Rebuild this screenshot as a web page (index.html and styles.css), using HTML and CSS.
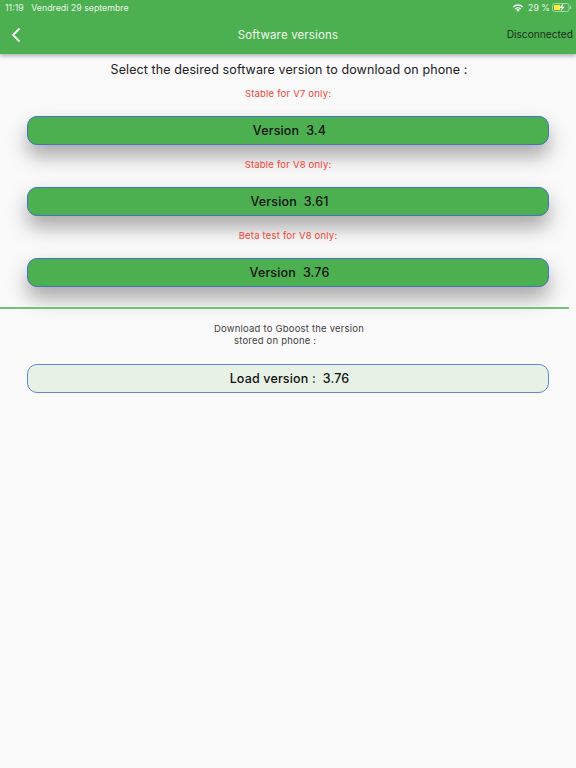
FILE: index.html
```html
<!DOCTYPE html>
<html lang="en">
<head>
<meta charset="utf-8">
<title>Software versions</title>
<link rel="stylesheet" href="styles.css">
</head>
<body>
<header class="appbar">
  <div class="status">
    <div class="status-left"><span>11:19</span><span>Vendredi 29 septembre</span></div>
    <div class="status-right">
      <svg class="wifi" viewBox="0 0 12 9" width="12" height="9"><path d="M6 8.8 4.2 6.9a2.6 2.6 0 0 1 3.6 0Z" fill="#fff"/><path d="M2.9 5.6a4.5 4.5 0 0 1 6.2 0L8.3 6.4a3.4 3.4 0 0 0-4.6 0Z" fill="#fff"/><path d="M.8 3.5a7.4 7.4 0 0 1 10.4 0l-.9.9a6.2 6.2 0 0 0-8.6 0Z" fill="#fff"/></svg>
      <span>29 %</span>
      <svg class="battery" viewBox="0 0 20 9" width="20" height="9"><rect x=".5" y=".5" width="16.5" height="8" rx="2" fill="none" stroke="#a5d6a7"/><rect x="2" y="2" width="6" height="5" fill="#ffeb3b"/><rect x="18" y="3" width="1.2" height="3" fill="#a5d6a7"/><path d="M11 0.5 7.3 5h2.4L8.5 8.5 12.9 3.8H10.5Z" fill="#fff"/></svg>
    </div>
  </div>
  <div class="toolbar">
    <svg class="back" viewBox="0 0 10 16" width="10" height="16"><path d="M8.5 1.5 2 8l6.5 6.5" fill="none" stroke="#fff" stroke-width="1.8"/></svg>
    <h1>Software versions</h1>
    <span class="conn">Disconnected</span>
  </div>
</header>
<main>
  <p class="lead">Select the desired software version to download on phone :</p>
  <p class="label">Stable for V7 only:</p>
  <button class="btn">Version&nbsp; 3.4</button>
  <p class="label">Stable for V8 only:</p>
  <button class="btn">Version&nbsp; 3.61</button>
  <p class="label">Beta test for V8 only:</p>
  <button class="btn">Version&nbsp; 3.76</button>
  <hr class="rule">
  <p class="note">Download to Gboost the version<br><span class="note-second">stored on phone :</span></p>
  <button class="btn btn-light">Load version :&nbsp; 3.76</button>
</main>
</body>
</html>
```
FILE: styles.css
```css
* { box-sizing: border-box; }
html, body { margin: 0; height: 100%; }
body {
  width: 576px;
  height: 768px;
  overflow: hidden;
  background: #fafafa;
  font-family: Inter, Roboto, "Liberation Sans", sans-serif;
  color: #212121;
}
.appbar {
  height: 54px;
  background: #4caf50;
  box-shadow: 0 2px 4px rgba(0,0,0,.3);
  color: #fff;
}
.status {
  height: 14px;
  display: flex;
  justify-content: space-between;
  align-items: center;
  padding: 0 4px 0 5px;
  font-size: 8.8px;
  color: #e8f5e9;
}
.status-left { display: flex; gap: 7.5px; }
.status-right { display: flex; align-items: center; gap: 2px; }
.wifi { margin-right: 2px; }
.toolbar {
  height: 40px;
  display: flex;
  align-items: center;
  justify-content: space-between;
  position: relative;
  padding: 1px 3px 0 11px;
}
.toolbar h1 {
  position: absolute;
  left: 0;
  right: 0;
  margin: 0;
  text-align: center;
  font-size: 11.5px;
  font-weight: 400;
  letter-spacing: .15px;
  color: #f1f8f1;
}
.conn { font-size: 10.2px; color: #1b2e1c; margin-bottom: 2px; }
main {
  display: flex;
  flex-direction: column;
  align-items: center;
}
.lead {
  margin: 8px 0 0 2px;
  height: 15px;
  line-height: 15px;
  font-size: 12.5px;
  letter-spacing: .1px;
}
.label {
  margin: 11px 0 0;
  height: 12px;
  line-height: 12px;
  font-size: 9.5px;
  letter-spacing: .2px;
  color: #f44336;
}
.btn {
  display: block;
  width: 522px;
  height: 29px;
  margin: 16px 0 0;
  padding: 0 0 0 3px;
  border: 1px solid #4472c4;
  border-radius: 10px;
  background: #4caf50;
  box-shadow: 0 11px 20px rgba(0,0,0,.34);
  font: 500 12.5px Inter, Roboto, "Liberation Sans", sans-serif;
  letter-spacing: .15px;
  color: #111;
}
.btn + .label { margin-top: 14px; }
.rule {
  align-self: flex-start;
  width: 569px;
  height: 2px;
  margin: 20px 0 0;
  border: 0;
  background: #74c277;
}
.note {
  margin: 14px 0 0 2px;
  line-height: 12px;
  font-size: 9.5px;
  letter-spacing: .2px;
  text-align: left;
  color: #424242;
}
.note-second { padding-left: 20px; }
.btn-light {
  margin-top: 17px;
  background: #e8f1e6;
  box-shadow: none;
  border-color: #5c8ad4;
}
```
